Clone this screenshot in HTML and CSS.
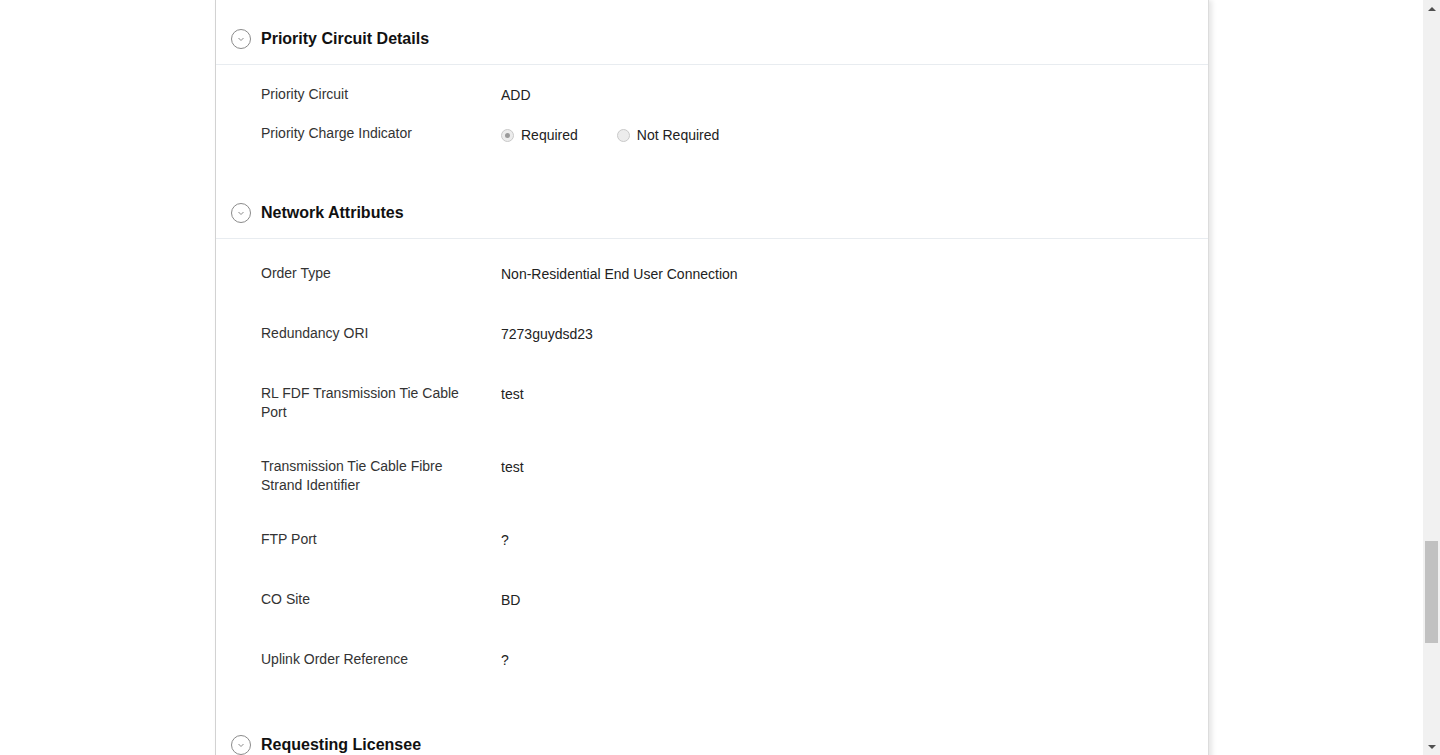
FILE: index.html
```html
<!DOCTYPE html>
<html lang="en">
<head>
<meta charset="utf-8">
<title>Order Details</title>
<link rel="stylesheet" href="styles.css">
</head>
<body>
<div class="window">
  <main class="viewport">
    <div class="panel">
      <section class="section">
        <header class="section-head">
          <span class="toggle"><svg width="20" height="20" viewBox="0 0 20 20"><circle cx="10" cy="10" r="9.5" fill="none" stroke="#8a8a8a" stroke-width="1"/><path d="M7.5 9 L10 11.5 L12.5 9" fill="none" stroke="#8a8a8a" stroke-width="1"/></svg></span>
          <h2 class="section-title">Priority Circuit Details</h2>
        </header>
        <div class="section-body compact">
          <div class="row">
            <div class="label">Priority Circuit</div>
            <div class="value">ADD</div>
          </div>
          <div class="row">
            <div class="label">Priority Charge Indicator</div>
            <div class="value radios">
              <span class="radio"><span class="dot checked"></span>Required</span>
              <span class="radio"><span class="dot"></span>Not Required</span>
            </div>
          </div>
        </div>
      </section>

      <section class="section">
        <header class="section-head">
          <span class="toggle"><svg width="20" height="20" viewBox="0 0 20 20"><circle cx="10" cy="10" r="9.5" fill="none" stroke="#8a8a8a" stroke-width="1"/><path d="M7.5 9 L10 11.5 L12.5 9" fill="none" stroke="#8a8a8a" stroke-width="1"/></svg></span>
          <h2 class="section-title">Network Attributes</h2>
        </header>
        <div class="section-body spaced">
          <div class="row">
            <div class="label">Order Type</div>
            <div class="value">Non-Residential End User Connection</div>
          </div>
          <div class="row">
            <div class="label">Redundancy ORI</div>
            <div class="value">7273guydsd23</div>
          </div>
          <div class="row">
            <div class="label">RL FDF Transmission Tie Cable Port</div>
            <div class="value">test</div>
          </div>
          <div class="row">
            <div class="label">Transmission Tie Cable Fibre Strand Identifier</div>
            <div class="value">test</div>
          </div>
          <div class="row">
            <div class="label">FTP Port</div>
            <div class="value">?</div>
          </div>
          <div class="row">
            <div class="label">CO Site</div>
            <div class="value">BD</div>
          </div>
          <div class="row">
            <div class="label">Uplink Order Reference</div>
            <div class="value">?</div>
          </div>
        </div>
      </section>

      <section class="section">
        <header class="section-head">
          <span class="toggle"><svg width="20" height="20" viewBox="0 0 20 20"><circle cx="10" cy="10" r="9.5" fill="none" stroke="#8a8a8a" stroke-width="1"/><path d="M7.5 9 L10 11.5 L12.5 9" fill="none" stroke="#8a8a8a" stroke-width="1"/></svg></span>
          <h2 class="section-title">Requesting Licensee</h2>
        </header>
      </section>
    </div>
  </main>
  <aside class="scrollbar">
    <div class="sb-btn"><span class="arrow-up"></span></div>
    <div class="sb-track"><div class="sb-thumb"></div></div>
    <div class="sb-btn"><span class="arrow-down"></span></div>
  </aside>
</div>
</body>
</html>
```

FILE: styles.css
```css
html, body {
  margin: 0;
  padding: 0;
  height: 100%;
  overflow: hidden;
  background: #ffffff;
  font-family: "Liberation Sans", Arial, sans-serif;
}

.window {
  display: flex;
  height: 755px;
}

.viewport {
  flex: 1;
  overflow: hidden;
  background: #fff;
}

.panel {
  margin-left: 215px;
  width: 994px;
  min-height: 755px;
  padding-top: 13px;
  box-sizing: border-box;
  border-left: 1px solid #d2d2d2;
  border-right: 1px solid #dcdcdc;
  box-shadow: 3px 0 5px rgba(0, 0, 0, 0.10);
  background: #fff;
}

.section-head {
  height: 51px;
  display: flex;
  align-items: center;
  gap: 10px;
  padding-left: 15px;
  border-bottom: 1px solid #e8ecf0;
}

.toggle {
  width: 20px;
  height: 20px;
  display: flex;
  margin-top: 1px;
}

.section-title {
  margin: 0;
  font-size: 16px;
  font-weight: bold;
  color: #111;
  line-height: 19px;
}

.section-body {
  padding-left: 45px;
}

.section-body.compact {
  padding-top: 20px;
  padding-bottom: 23px;
}

.section-body.compact .row {
  margin-bottom: 19px;
}

.section-body.spaced {
  padding-top: 25px;
  padding-bottom: 9px;
}

.section-body.spaced .row {
  min-height: 25px;
  margin-bottom: 35px;
}

.row {
  display: grid;
  grid-template-columns: 220px 1fr;
  column-gap: 20px;
  font-size: 14px;
  line-height: 19px;
}

.label {
  color: #333;
}

.value {
  color: #222;
  padding-top: 1px;
}

.radios {
  display: flex;
  gap: 39px;
  padding-top: 2px;
}

.radio {
  display: flex;
  align-items: center;
  gap: 7px;
}

.dot {
  width: 11px;
  height: 11px;
  border-radius: 50%;
  border: 1px solid #c9c9c9;
  background: #ececec;
  display: flex;
  align-items: center;
  justify-content: center;
  box-sizing: content-box;
}

.dot.checked::after {
  content: "";
  width: 5px;
  height: 5px;
  border-radius: 50%;
  background: #9a9a9a;
}

.scrollbar {
  width: 17px;
  background: #f1f1f1;
  display: flex;
  flex-direction: column;
}

.sb-btn {
  height: 17px;
  display: flex;
  align-items: center;
  justify-content: center;
}

.arrow-up {
  width: 0;
  height: 0;
  border-left: 4px solid transparent;
  border-right: 4px solid transparent;
  border-bottom: 4px solid #505050;
}

.arrow-down {
  width: 0;
  height: 0;
  border-left: 4px solid transparent;
  border-right: 4px solid transparent;
  border-top: 4px solid #505050;
}

.sb-track {
  flex: 1;
  padding: 0 2px;
}

.sb-thumb {
  margin-top: 524px;
  height: 102px;
  background: #c1c1c1;
}
```
